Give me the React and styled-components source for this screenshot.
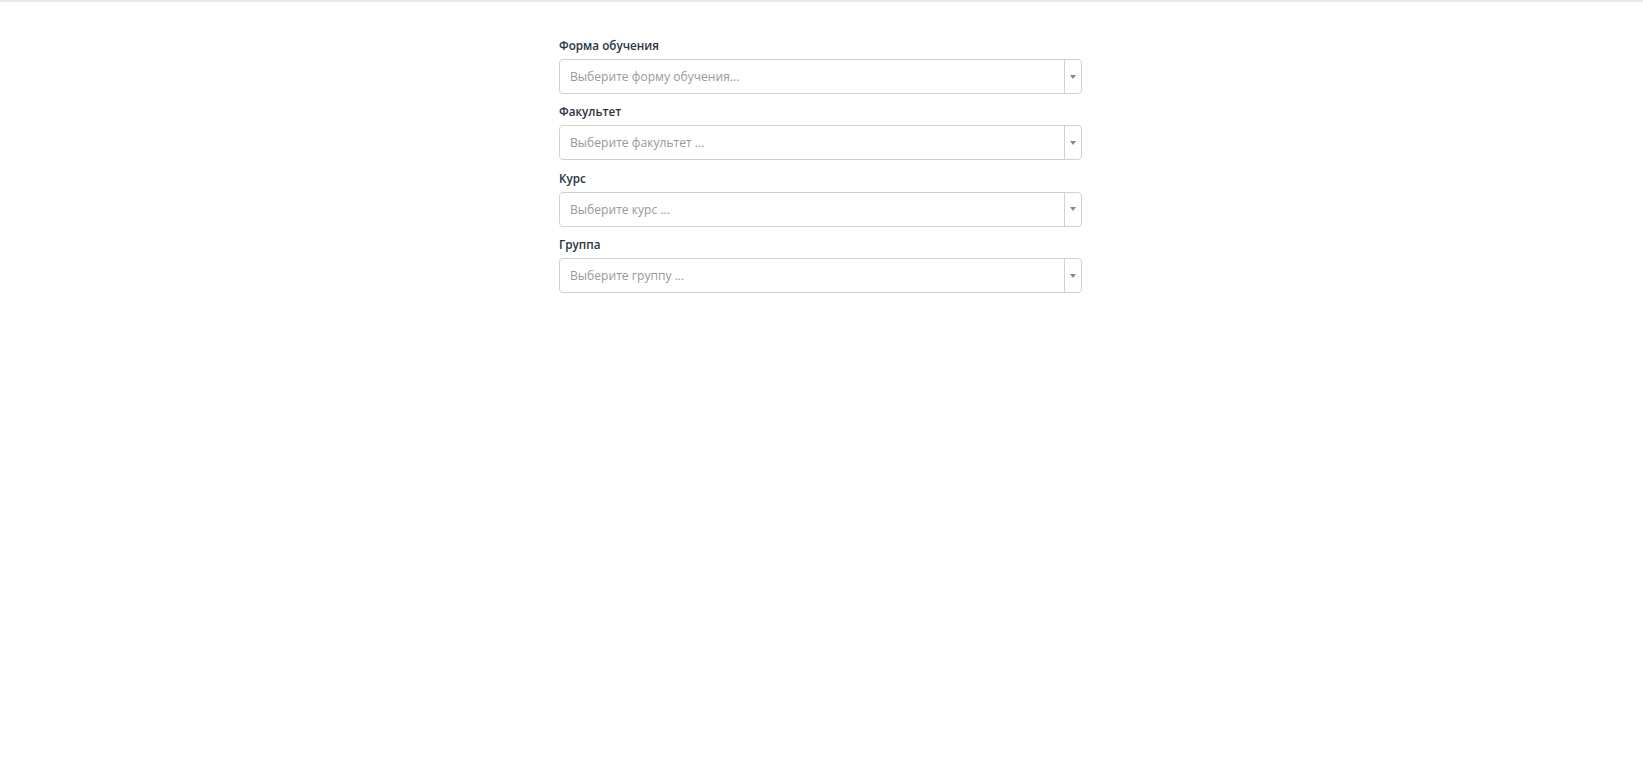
import styled, { createGlobalStyle } from 'styled-components'

const GlobalStyle = createGlobalStyle`
    html, body {
        margin: 0;
        padding: 0;
        background: #fff;
        font-family: 'Open Sans', 'Liberation Sans', sans-serif;
    }
`

const Page = styled.div`
    min-height: 783px;
    border-top: 2px solid #e8e8e8;
    box-sizing: border-box;
`

const Form = styled.div`
    width: 523px;
    margin: 0 auto;
    padding-top: 33px;
    transform: translateX(-1px);
`

const Group = styled.div`
    margin-bottom: 7.4px;
`

const Label = styled.label`
    display: block;
    font-size: 11.7px;
    font-weight: 600;
    line-height: 20px;
    margin-bottom: 4px;
    color: #2a3440;
`

const Select = styled.div`
    display: flex;
    height: 35px;
    box-sizing: border-box;
    border: 1px solid #d2d2d2;
    border-radius: 4px;
    background: #fff;
    cursor: pointer;
`

const Placeholder = styled.span`
    flex: 1;
    display: flex;
    align-items: center;
    padding-left: 10px;
    font-size: 12.1px;
    color: #999;
`

const Arrow = styled.span`
    width: 16px;
    display: flex;
    align-items: center;
    justify-content: center;
    border-left: 1px solid #d2d2d2;

    &::after {
        content: '';
        border-left: 3.5px solid transparent;
        border-right: 3.5px solid transparent;
        border-top: 4px solid #888;
    }
`

const fields = [
    { label: 'Форма обучения', placeholder: 'Выберите форму обучения...' },
    { label: 'Факультет', placeholder: 'Выберите факультет ...' },
    { label: 'Курс', placeholder: 'Выберите курс ...' },
    { label: 'Группа', placeholder: 'Выберите группу ...' },
]

function App() {
    return (
        <Page>
            <GlobalStyle />
            <Form>
                {fields.map((f) => (
                    <Group key={f.label}>
                        <Label>{f.label}</Label>
                        <Select>
                            <Placeholder>{f.placeholder}</Placeholder>
                            <Arrow />
                        </Select>
                    </Group>
                ))}
            </Form>
        </Page>
    )
}

export default App
